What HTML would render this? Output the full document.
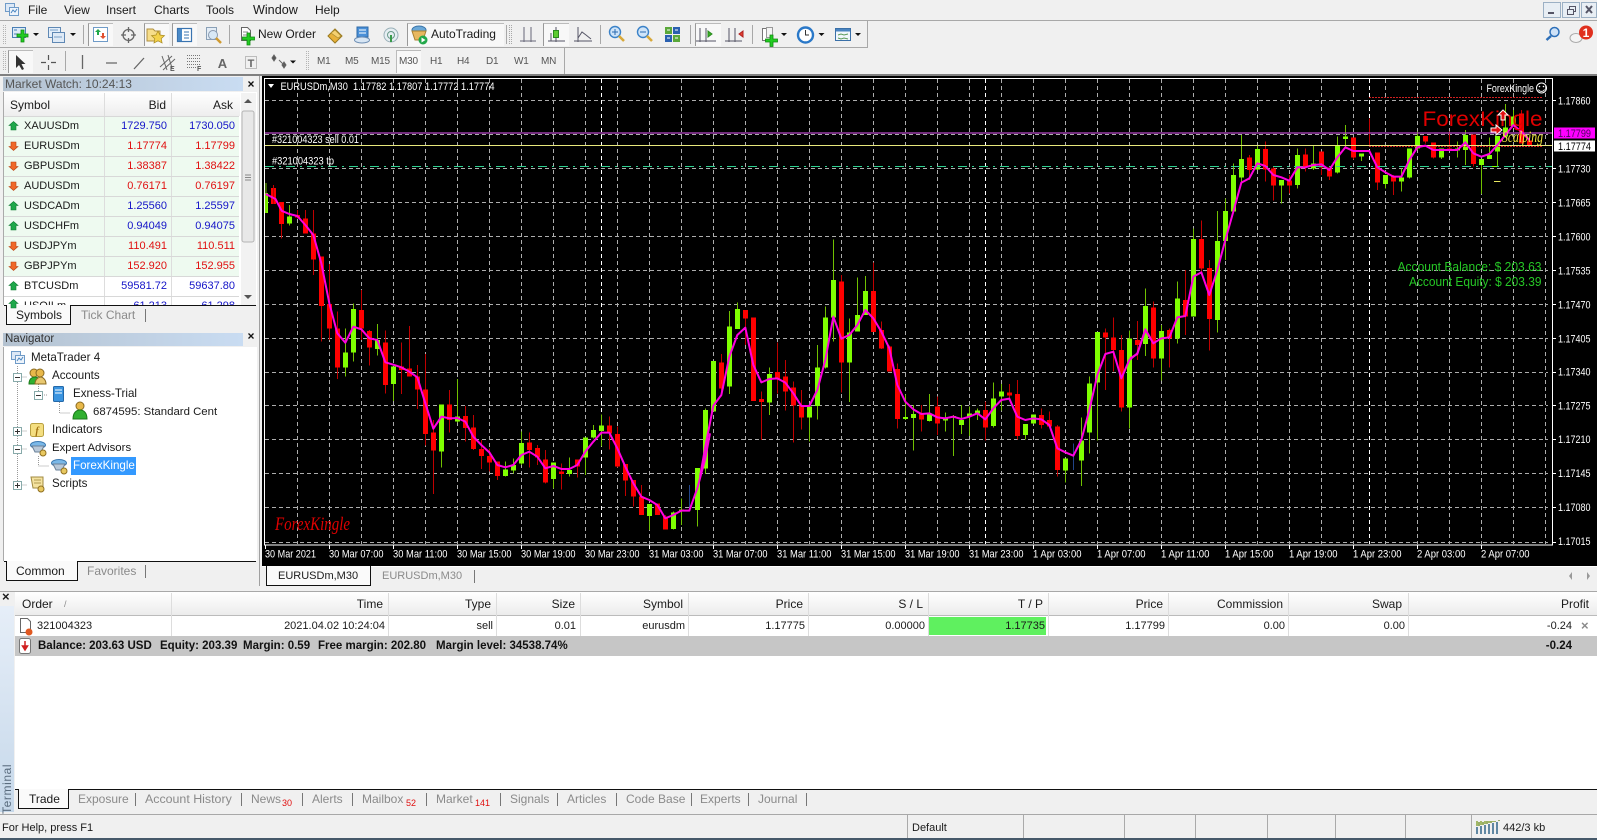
<!DOCTYPE html>
<html><head><meta charset="utf-8"><title>MetaTrader 4</title>
<style>
html,body{margin:0;padding:0;width:1597px;height:840px;overflow:hidden;background:#f0f0f0}
body{font:12px "Liberation Sans",Arial,sans-serif;color:#1a1a1a;position:relative}
.a{position:absolute;white-space:nowrap;line-height:14px}
.b{position:absolute}
.n{font-size:11px}
.bd{font-size:11.5px;font-weight:bold;color:#111}
.g{color:#8a8a8a}
.bl{color:#1414c8}.rd{color:#e01010}
.tf{font-size:10px;color:#555;letter-spacing:-.2px}
sub{position:absolute;color:#e01010;font-size:9px;line-height:9px}
svg{position:absolute;left:0;top:0}
svg text{font-family:"Liberation Sans",Arial,sans-serif}
</style></head><body>

<!-- menu + toolbars background -->
<div class="b" style="left:0;top:20px;width:1597px;height:1px;background:#a8a8a8"></div>
<div class="b" style="left:0;top:47px;width:868px;height:1px;background:#a8a8a8"></div>
<div class="b" style="left:867px;top:21px;width:1px;height:26px;background:#a8a8a8"></div>
<div class="b" style="left:564px;top:48px;width:1px;height:26px;background:#a8a8a8"></div>
<div class="b" style="left:0;top:74px;width:1597px;height:2px;background:#808080"></div>

<div class="a" style="left:28px;top:3px">File</div>
<div class="a" style="left:64px;top:3px">View</div>
<div class="a" style="left:106px;top:3px">Insert</div>
<div class="a" style="left:154px;top:3px">Charts</div>
<div class="a" style="left:206px;top:3px">Tools</div>
<div class="a" style="left:253px;top:3px;font-size:12.6px">Window</div>
<div class="a" style="left:315px;top:3px">Help</div>

<!-- pressed buttons -->
<div class="b" style="left:88px;top:23px;width:24px;height:22px;background:#f8f8f8;border-left:1px solid #999;border-top:1px solid #bbb"></div>
<div class="b" style="left:144px;top:23px;width:24px;height:22px;background:#f8f8f8;border-left:1px solid #999;border-top:1px solid #bbb"></div>
<div class="b" style="left:172px;top:23px;width:24px;height:22px;background:#f8f8f8;border-left:1px solid #999;border-top:1px solid #bbb"></div>
<div class="b" style="left:407px;top:23px;width:96px;height:22px;background:#f8f8f8;border-left:1px solid #999;border-top:1px solid #bbb"></div>
<div class="b" style="left:543px;top:23px;width:25px;height:22px;background:#f8f8f8;border-left:1px solid #999;border-top:1px solid #bbb"></div>
<div class="b" style="left:695px;top:23px;width:25px;height:22px;background:#f8f8f8;border-left:1px solid #999;border-top:1px solid #bbb"></div>
<div class="b" style="left:8px;top:50px;width:24px;height:22px;background:#f8f8f8;border-left:1px solid #999;border-top:1px solid #bbb"></div>
<div class="b" style="left:396px;top:50px;width:24px;height:22px;background:#f8f8f8;border:1px solid #bbb;border-bottom:0;border-right:0"></div>

<div class="a" style="left:258px;top:27px">New Order</div>
<div class="a" style="left:431px;top:27px">AutoTrading</div>

<div class="a tf" style="left:317px;top:55px">M1</div>
<div class="a tf" style="left:345px;top:55px">M5</div>
<div class="a tf" style="left:371px;top:55px">M15</div>
<div class="a tf" style="left:399px;top:55px">M30</div>
<div class="a tf" style="left:430px;top:55px">H1</div>
<div class="a tf" style="left:457px;top:55px">H4</div>
<div class="a tf" style="left:486px;top:55px">D1</div>
<div class="a tf" style="left:514px;top:55px">W1</div>
<div class="a tf" style="left:541px;top:55px">MN</div>

<!-- Market Watch -->
<div class="b" style="left:3px;top:77px;width:240px;height:14px;background:linear-gradient(90deg,#b4c2d0,#c9dcf2)"></div>
<div class="a" style="left:5px;top:77px;color:#555">Market Watch: 10:24:13</div>
<div class="b" style="left:3px;top:92px;width:253px;height:213px;background:#fff;border-left:1px solid #aaa"></div>
<div class="b" style="left:4px;top:92px;width:236px;height:24px;background:linear-gradient(#fff,#eee)"></div>
<div class="b" style="left:104px;top:93px;width:1px;height:212px;background:#ddd"></div>
<div class="b" style="left:171px;top:93px;width:1px;height:212px;background:#ddd"></div>
<div class="b" style="left:4px;top:116px;width:100px;height:160px;background:#eefaf0"></div>
<div class="b" style="left:105px;top:116px;width:66px;height:160px;background:#eefaf0"></div>
<div class="b" style="left:172px;top:116px;width:67px;height:160px;background:#eefaf0"></div>
<div class="b" style="left:4px;top:136px;width:235px;height:1px;background:#d8d8d8"></div>
<div class="b" style="left:4px;top:156px;width:235px;height:1px;background:#d8d8d8"></div>
<div class="b" style="left:4px;top:176px;width:235px;height:1px;background:#d8d8d8"></div>
<div class="b" style="left:4px;top:196px;width:235px;height:1px;background:#d8d8d8"></div>
<div class="b" style="left:4px;top:216px;width:235px;height:1px;background:#d8d8d8"></div>
<div class="b" style="left:4px;top:236px;width:235px;height:1px;background:#d8d8d8"></div>
<div class="b" style="left:4px;top:256px;width:235px;height:1px;background:#d8d8d8"></div>
<div class="b" style="left:4px;top:276px;width:235px;height:1px;background:#d8d8d8"></div>
<div class="b" style="left:4px;top:296px;width:235px;height:1px;background:#d8d8d8"></div>
<div class="b" style="left:4px;top:116px;width:235px;height:1px;background:#d8d8d8"></div>
<div class="a" style="left:10px;top:98px">Symbol</div>
<div class="a" style="right:1431px;top:98px">Bid</div>
<div class="a" style="right:1364px;top:98px">Ask</div>

<div class="a n" style="left:24px;top:119px">XAUUSDm</div><div class="a n bl" style="right:1430px;top:119px">1729.750</div><div class="a n bl" style="right:1362px;top:119px">1730.050</div>
<div class="a n" style="left:24px;top:139px">EURUSDm</div><div class="a n rd" style="right:1430px;top:139px">1.17774</div><div class="a n rd" style="right:1362px;top:139px">1.17799</div>
<div class="a n" style="left:24px;top:159px">GBPUSDm</div><div class="a n rd" style="right:1430px;top:159px">1.38387</div><div class="a n rd" style="right:1362px;top:159px">1.38422</div>
<div class="a n" style="left:24px;top:179px">AUDUSDm</div><div class="a n rd" style="right:1430px;top:179px">0.76171</div><div class="a n rd" style="right:1362px;top:179px">0.76197</div>
<div class="a n" style="left:24px;top:199px">USDCADm</div><div class="a n bl" style="right:1430px;top:199px">1.25560</div><div class="a n bl" style="right:1362px;top:199px">1.25597</div>
<div class="a n" style="left:24px;top:219px">USDCHFm</div><div class="a n bl" style="right:1430px;top:219px">0.94049</div><div class="a n bl" style="right:1362px;top:219px">0.94075</div>
<div class="a n" style="left:24px;top:239px">USDJPYm</div><div class="a n rd" style="right:1430px;top:239px">110.491</div><div class="a n rd" style="right:1362px;top:239px">110.511</div>
<div class="a n" style="left:24px;top:259px">GBPJPYm</div><div class="a n rd" style="right:1430px;top:259px">152.920</div><div class="a n rd" style="right:1362px;top:259px">152.955</div>
<div class="a n" style="left:24px;top:279px">BTCUSDm</div><div class="a n bl" style="right:1430px;top:279px">59581.72</div><div class="a n bl" style="right:1362px;top:279px">59637.80</div>
<div class="a n" style="left:24px;top:299px">USOILm</div><div class="a n bl" style="right:1430px;top:299px">61.213</div><div class="a n bl" style="right:1362px;top:299px">61.298</div>

<!-- MW tabs -->
<div class="b" style="left:0;top:305px;width:260px;height:28px;background:#f0f0f0"></div>
<div class="b" style="left:4px;top:305px;width:252px;height:1px;background:#111"></div>
<div class="b" style="left:6px;top:305px;width:63px;height:19px;background:#fafafa;border:1px solid #111;border-top:0"></div>
<div class="a" style="left:16px;top:308px">Symbols</div>
<div class="a g" style="left:81px;top:308px">Tick Chart</div>
<div class="b" style="left:145px;top:309px;width:1px;height:13px;background:#777"></div>

<!-- Navigator -->
<div class="b" style="left:3px;top:333px;width:240px;height:13px;background:linear-gradient(90deg,#b4c2d0,#c9dcf2)"></div>
<div class="a" style="left:5px;top:332px;color:#333;font-size:11.5px">Navigator</div>
<div class="b" style="left:3px;top:347px;width:253px;height:214px;background:#fff;border-left:1px solid #aaa"></div>
<div class="a" style="left:31px;top:351px;font-size:11.6px">MetaTrader 4</div>
<div class="a" style="left:52px;top:369px;font-size:11.6px">Accounts</div>
<div class="a" style="left:73px;top:387px;font-size:11.6px">Exness-Trial</div>
<div class="a" style="left:93px;top:405px;font-size:11.4px">6874595: Standard Cent</div>
<div class="a" style="left:52px;top:423px;font-size:11.6px">Indicators</div>
<div class="a" style="left:52px;top:441px;font-size:11.4px">Expert Advisors</div>
<div class="b" style="left:71px;top:457px;width:65px;height:18px;background:#3399ff"></div>
<div class="a" style="left:73px;top:459px;color:#fff;font-size:11.6px">ForexKingle</div>
<div class="a" style="left:52px;top:477px;font-size:11.6px">Scripts</div>

<div class="b" style="left:4px;top:561px;width:252px;height:1px;background:#111"></div>
<div class="b" style="left:6px;top:561px;width:70px;height:19px;background:#fafafa;border:1px solid #111;border-top:0"></div>
<div class="a" style="left:16px;top:564px">Common</div>
<div class="a g" style="left:87px;top:564px">Favorites</div>
<div class="b" style="left:145px;top:565px;width:1px;height:13px;background:#777"></div>
<div class="b" style="left:259px;top:76px;width:1px;height:510px;background:#a0a0a0"></div>

<!-- Chart tabs -->
<div class="b" style="left:262px;top:566px;width:1335px;height:1px;background:#fff"></div>
<div class="b" style="left:266px;top:566px;width:103px;height:19px;background:#fafafa;border:1px solid #111;border-top:0"></div>
<div class="a n" style="left:278px;top:569px">EURUSDm,M30</div>
<div class="a n g" style="left:382px;top:569px">EURUSDm,M30</div>
<div class="b" style="left:474px;top:570px;width:1px;height:13px;background:#777"></div>

<!-- Terminal -->
<div class="b" style="left:0;top:591px;width:1597px;height:1px;background:#a8a8a8"></div>
<div class="b" style="left:0;top:606px;width:14px;height:206px;background:linear-gradient(#e6eef8,#c6d8ea)"></div>
<div class="a" style="left:2px;top:590px;font-weight:bold;font-size:13px">×</div>
<div class="a" style="left:-19px;top:781px;width:52px;transform:rotate(-90deg);color:#5a6c7e;font-size:12px;letter-spacing:.6px;text-align:left">Terminal</div>
<div class="b" style="left:15px;top:592px;width:1582px;height:197px;background:#fff"></div>
<div class="b" style="left:15px;top:592px;width:1582px;height:23px;background:linear-gradient(#fff,#ececec);border-bottom:1px solid #bbb"></div>
<div class="b" style="left:15px;top:616px;width:1582px;height:20px;background:#fff"></div>
<div class="b" style="left:929px;top:617px;width:117px;height:18px;background:#5ff05f"></div>
<div class="b" style="left:15px;top:636px;width:1582px;height:20px;background:#c6c6c6"></div>

<div class="b" style="left:171px;top:593px;width:1px;height:43px;background:#ddd"></div>
<div class="b" style="left:388px;top:593px;width:1px;height:43px;background:#ddd"></div>
<div class="b" style="left:496px;top:593px;width:1px;height:43px;background:#ddd"></div>
<div class="b" style="left:580px;top:593px;width:1px;height:43px;background:#ddd"></div>
<div class="b" style="left:688px;top:593px;width:1px;height:43px;background:#ddd"></div>
<div class="b" style="left:808px;top:593px;width:1px;height:43px;background:#ddd"></div>
<div class="b" style="left:928px;top:593px;width:1px;height:43px;background:#ddd"></div>
<div class="b" style="left:1048px;top:593px;width:1px;height:43px;background:#ddd"></div>
<div class="b" style="left:1168px;top:593px;width:1px;height:43px;background:#ddd"></div>
<div class="b" style="left:1288px;top:593px;width:1px;height:43px;background:#ddd"></div>
<div class="b" style="left:1408px;top:593px;width:1px;height:43px;background:#ddd"></div>

<div class="a" style="left:22px;top:597px">Order</div><div class="a g" style="left:64px;top:597px;font-size:9px">/</div>
<div class="a" style="right:1214px;top:597px">Time</div>
<div class="a" style="right:1106px;top:597px">Type</div>
<div class="a" style="right:1022px;top:597px">Size</div>
<div class="a" style="right:914px;top:597px">Symbol</div>
<div class="a" style="right:794px;top:597px">Price</div>
<div class="a" style="right:674px;top:597px">S / L</div>
<div class="a" style="right:554px;top:597px">T / P</div>
<div class="a" style="right:434px;top:597px">Price</div>
<div class="a" style="right:314px;top:597px">Commission</div>
<div class="a" style="right:195px;top:597px">Swap</div>
<div class="a" style="right:8px;top:597px">Profit</div>

<div class="a n" style="left:37px;top:619px">321004323</div>
<div class="a n" style="right:1212px;top:619px">2021.04.02 10:24:04</div>
<div class="a n" style="right:1104px;top:619px">sell</div>
<div class="a n" style="right:1021px;top:619px">0.01</div>
<div class="a n" style="right:912px;top:619px">eurusdm</div>
<div class="a n" style="right:792px;top:619px">1.17775</div>
<div class="a n" style="right:672px;top:619px">0.00000</div>
<div class="a n" style="right:552px;top:619px">1.17735</div>
<div class="a n" style="right:432px;top:619px">1.17799</div>
<div class="a n" style="right:312px;top:619px">0.00</div>
<div class="a n" style="right:192px;top:619px">0.00</div>
<div class="a n" style="right:25px;top:619px">-0.24</div>
<div class="a g" style="left:1581px;top:619px;font-size:13px;font-weight:bold">×</div>

<div class="a bd" style="left:38px;top:639px">Balance: 203.63 USD</div>
<div class="a bd" style="left:160px;top:639px">Equity: 203.39</div>
<div class="a bd" style="left:243px;top:639px">Margin: 0.59</div>
<div class="a bd" style="left:318px;top:639px">Free margin: 202.80</div>
<div class="a bd" style="left:436px;top:639px">Margin level: 34538.74%</div>
<div class="a bd" style="right:25px;top:639px">-0.24</div>

<!-- Terminal tabs -->
<div class="b" style="left:15px;top:789px;width:1582px;height:1px;background:#111"></div>
<div class="b" style="left:18px;top:789px;width:49px;height:19px;background:#fafafa;border:1px solid #111;border-top:0"></div>
<div class="a" style="left:29px;top:792px">Trade</div>
<div class="a g" style="left:78px;top:792px">Exposure</div>
<div class="a g" style="left:145px;top:792px;font-size:12.4px">Account History</div>
<div class="a g" style="left:251px;top:792px">News</div><sub style="left:282px;top:799px">30</sub>
<div class="a g" style="left:312px;top:792px">Alerts</div>
<div class="a g" style="left:362px;top:792px">Mailbox</div><sub style="left:406px;top:799px">52</sub>
<div class="a g" style="left:436px;top:792px">Market</div><sub style="left:475px;top:799px">141</sub>
<div class="a g" style="left:510px;top:792px">Signals</div>
<div class="a g" style="left:567px;top:792px">Articles</div>
<div class="a g" style="left:626px;top:792px">Code Base</div>
<div class="a g" style="left:700px;top:792px">Experts</div>
<div class="a g" style="left:758px;top:792px">Journal</div>
<div class="b" style="left:135px;top:793px;width:1px;height:13px;background:#777"></div>
<div class="b" style="left:241px;top:793px;width:1px;height:13px;background:#777"></div>
<div class="b" style="left:302px;top:793px;width:1px;height:13px;background:#777"></div>
<div class="b" style="left:352px;top:793px;width:1px;height:13px;background:#777"></div>
<div class="b" style="left:426px;top:793px;width:1px;height:13px;background:#777"></div>
<div class="b" style="left:500px;top:793px;width:1px;height:13px;background:#777"></div>
<div class="b" style="left:557px;top:793px;width:1px;height:13px;background:#777"></div>
<div class="b" style="left:616px;top:793px;width:1px;height:13px;background:#777"></div>
<div class="b" style="left:691px;top:793px;width:1px;height:13px;background:#777"></div>
<div class="b" style="left:748px;top:793px;width:1px;height:13px;background:#777"></div>
<div class="b" style="left:806px;top:793px;width:1px;height:13px;background:#777"></div>

<!-- Status bar -->
<div class="b" style="left:0;top:814px;width:1597px;height:1px;background:#a8a8a8"></div>
<div class="a n" style="left:2px;top:821px">For Help, press F1</div>
<div class="a n" style="left:912px;top:821px">Default</div>
<div class="a n" style="left:1503px;top:821px">442/3 kb</div>
<div class="b" style="left:907px;top:815px;width:1px;height:23px;background:#aaa"></div>
<div class="b" style="left:1023px;top:815px;width:1px;height:23px;background:#aaa"></div>
<div class="b" style="left:1124px;top:815px;width:1px;height:23px;background:#aaa"></div>
<div class="b" style="left:1195px;top:815px;width:1px;height:23px;background:#aaa"></div>
<div class="b" style="left:1267px;top:815px;width:1px;height:23px;background:#aaa"></div>
<div class="b" style="left:1335px;top:815px;width:1px;height:23px;background:#aaa"></div>
<div class="b" style="left:1405px;top:815px;width:1px;height:23px;background:#aaa"></div>
<div class="b" style="left:1471px;top:815px;width:1px;height:23px;background:#aaa"></div>
<div class="b" style="left:0;top:838px;width:1597px;height:2px;background:#46596a"></div>

<!-- Everything drawn -->
<svg width="1597" height="840" viewBox="0 0 1597 840" xmlns="http://www.w3.org/2000/svg">
<defs>
<clipPath id="cc"><rect x="265" y="79" width="1287" height="465"/></clipPath>
<path id="up" d="M0-4.500 4.500-.5H2.500V4H-2.500V-.5H-4.500Z" fill="#1ea84a" stroke="#0c7a30" stroke-width=".6"/>
<path id="dn" d="M0 4.500 4.500 .5H2.500V-4H-2.500V.5H-4.500Z" fill="#f0682a" stroke="#b84010" stroke-width=".6"/>
</defs>

<!-- window buttons -->
<g fill="#e8eef4" stroke="#9cb0c4">
<rect x="1543.5" y="2.5" width="17" height="15"/><rect x="1562.5" y="2.5" width="17" height="15"/><rect x="1581.5" y="2.5" width="15" height="15"/>
</g>
<path d="M1548 13h6" stroke="#556" stroke-width="2"/>
<path d="M1567.5 9.5h6v5h-6zM1569.5 9V6.5h6v5h-2" fill="none" stroke="#556"/>
<path d="M1586 6l6 7M1592 6l-6 7" stroke="#556" stroke-width="2"/>

<!-- right icons -->
<circle cx="1554.5" cy="32" r="4.5" fill="#cfe2f7" stroke="#2d6fb8" stroke-width="1.5"/>
<path d="M1551 36l-4.5 4" stroke="#2d6fb8" stroke-width="2.5"/>
<ellipse cx="1576" cy="38" rx="6" ry="4.5" fill="#f4f4f4" stroke="#aaa"/>
<circle cx="1586" cy="32.5" r="7" fill="#e0301e"/>
<text x="1586" y="37" font-size="12" font-weight="bold" fill="#fff" text-anchor="middle">1</text>

<!-- menu logo -->
<rect x="5.5" y="3.5" width="9" height="8" fill="#dce8f6" stroke="#6f9bc8"/><rect x="9.5" y="7.5" width="9" height="8" fill="#eef4fb" stroke="#6f9bc8"/>
<path d="M11 13l2-3 2 2 2-3" fill="none" stroke="#4a86c0"/>

<!-- grips and toolbar separators -->
<g stroke="#b4b4b4" stroke-dasharray="1 1" fill="none">
<path d="M3.5 25V44M5.5 25V44M3.5 51V71M5.5 51V71M306.5 51V71M308.5 51V71"/>
</g>
<g stroke="#a8a8a8">
<path d="M83.5 25V44M229.5 25V44M506.5 25V44M600.5 25V44M690.5 25V44M752.5 25V44M65.5 51V71"/>
<path d="M509.5 25V44M511.5 25V44" stroke-dasharray="1 1"/>
</g>

<!-- toolbar 1 icons -->
<g>
<rect x="12.5" y="27.5" width="13" height="10" fill="#dceaf8" stroke="#4a7fb5"/><path d="M14 30h3M14 34h4" stroke="#4a7fb5"/>
<path d="M21 30h3v4h4v3h-4v5h-3v-5h-4v-3h4z" fill="#22cc22" stroke="#0f8a0f" stroke-width=".8"/>
<path d="M33 33h6l-3 3z" fill="#111"/>
<rect x="48.5" y="27.5" width="12" height="10" fill="#e3eefa" stroke="#5f88b4"/><rect x="52.5" y="32.5" width="12" height="10" fill="#dfeaf6" stroke="#5f88b4"/><path d="M50 30h8M54 37h8" stroke="#7aa0c8"/>
<path d="M70 33h6l-3 3z" fill="#111"/>
<rect x="93.5" y="27.5" width="14" height="14" fill="#fff" stroke="#6f9bc8"/><path d="M98 29l3 3h-2v3h-2v-3h-2z" fill="#1fa84a"/><path d="M103 39l3-3h-2v-3h-2v3h-2z" fill="#e05030"/>
<circle cx="128.5" cy="35" r="5.5" fill="none" stroke="#666" stroke-width="1.3"/><path d="M128.5 27v5M128.5 38v5M121 35h5M131 35h5" stroke="#666" stroke-width="1.3"/>
<path d="M147 29h6l2 2h5v10h-13z" fill="#f6dd8a" stroke="#b09040"/><path d="M158 31l2 4 4.5.6-3.3 3 .9 4.4-4.1-2.2-4 2.2.8-4.4-3.3-3 4.500-.6z" fill="#f4d24a" stroke="#a88a20" stroke-width=".7"/>
<rect x="177.5" y="28.5" width="14" height="13" fill="#fff" stroke="#3a74b0" stroke-width="1.2"/><rect x="178" y="29" width="4" height="12" fill="#4a8ac8"/><path d="M184 32h5M184 35h5M184 38h5" stroke="#3a74b0"/>
<rect x="206.5" y="27.5" width="10" height="12" fill="#e4edf6" stroke="#8aa0b6"/><circle cx="213" cy="35" r="4.5" fill="#d8e8f6" stroke="#8a9ab0"/><path d="M216 38l5 5" stroke="#d09a30" stroke-width="2.5"/>
</g>
<g>
<path d="M241.5 27.5h6l3 3v10h-9z" fill="#fff" stroke="#666"/>
<path d="M243 32h5M243 35h5" stroke="#888"/>
<path d="M247 33h3v4h4.5v3h-4.5v5h-3v-5h-4.5v-3h4.5z" fill="#22cc22" stroke="#0f8a0f" stroke-width=".8"/>
<path d="M328 36l7-7 7 7-7 7z" fill="#e8b13a" stroke="#9a7a20"/><path d="M331 33l4-3 6 6-3 2z" fill="#f5d070" stroke="#a88a30" stroke-width=".7"/>
<path d="M357 27h11v10h-11z" fill="#4a90d8" stroke="#2e6aa8"/><path d="M359 30h7M359 33h7" stroke="#fff"/>
<ellipse cx="362" cy="40" rx="7.5" ry="3" fill="#d8e6f4" stroke="#6f8fb4"/>
<circle cx="391" cy="35" r="7" fill="#e6eef2" stroke="#9ab0b8"/><circle cx="391" cy="35" r="3.5" fill="none" stroke="#6a9a8a"/><path d="M391 35v7" stroke="#3a9a4a" stroke-width="2"/>
<ellipse cx="419" cy="30" rx="7" ry="4" fill="#6aa8d8" stroke="#3a74a8"/>
<path d="M412 31h14l-3 9h-8z" fill="#e8b860" stroke="#a88030"/>
<circle cx="423" cy="40" r="4.5" fill="#22a84a"/><path d="M421.5 37.5l4 2.5-4 2.5z" fill="#fff"/>
</g>
<g fill="none" stroke="#556">
<path d="M524 27v15M531 27v15M520 41h16" stroke="#667"/>
<path d="M556 27v15M548 41h17M551 33v8"/>
<rect x="553.5" y="30.5" width="5" height="7" fill="#5ccc30" stroke="#2a8a20"/>
<path d="M578 27v15M574 41h18M578 38l4-6 4 3 5 4"/>
<path d="M700 28v14M716 41h-20M706 28v14"/><path d="M708 31l4 3-4 3z" fill="#3ab020" stroke="#2a8a20"/>
<path d="M729 28v14M735 28v14M725 41h17"/><path d="M743 31l-4 3 4 3z" fill="#e04030" stroke="#b02020"/>
</g>
<g>
<circle cx="615" cy="32" r="5.5" fill="#cfe4f8" stroke="#3a82c8" stroke-width="1.4"/><path d="M612 32h6M615 29v6" stroke="#2a6ab0"/><path d="M619 36l5 5" stroke="#d8a83a" stroke-width="2.6"/>
<circle cx="643" cy="32" r="5.5" fill="#cfe4f8" stroke="#3a82c8" stroke-width="1.4"/><path d="M640 32h6" stroke="#2a6ab0"/><path d="M647 36l5 5" stroke="#d8a83a" stroke-width="2.6"/>
<rect x="665" y="27" width="7" height="7" fill="#5aa83a"/><rect x="673" y="27" width="7" height="7" fill="#2a60b0"/><rect x="665" y="35" width="7" height="7" fill="#2a60b0"/><rect x="673" y="35" width="7" height="7" fill="#5aa83a"/>
<path d="M667 30h3M675 30h3M667 38h3M675 38h3" stroke="#fff"/>
<rect x="762.5" y="28.5" width="10" height="12" fill="#fff" stroke="#777"/><rect x="766.5" y="27.5" width="6" height="10" fill="#f4f4f4" stroke="#999"/>
<path d="M770 35h3v4h4.5v3H773v4.5h-3V42h-4.5v-3h4.5z" fill="#22cc22" stroke="#0f8a0f" stroke-width=".8"/>
<path d="M781 33h6l-3 3z" fill="#111"/>
<circle cx="805.5" cy="35" r="7.5" fill="#fff" stroke="#2a78c8" stroke-width="2.4"/><path d="M805.5 30v5h3.5" fill="none" stroke="#333"/>
<path d="M818.5 33h6l-3 3z" fill="#111"/>
<rect x="835.5" y="28.5" width="15" height="12" fill="#f0f6fc" stroke="#3a70a8"/><rect x="836" y="29" width="14" height="2.5" fill="#4a84c0"/><path d="M838 35l3-1 3 1 4-1M838 38l3 1 3-1 4 1" fill="none" stroke="#5a9a5a"/>
<path d="M855 33h6l-3 3z" fill="#111"/>
</g>

<!-- toolbar 2 icons -->
<path d="M16 55l0 13 3-3 3 5 2-1-2.5-5 4 0z" fill="#333"/>
<path d="M48.5 55v5M48.5 65v5M41 62.5h5M51 62.5h5" stroke="#555" stroke-width="1.2"/>
<path d="M82.5 55v14M106 63h11M134 69l10-11" stroke="#666" stroke-width="1.3"/>
<g stroke="#666" fill="none"><path d="M160 67l12-11M163 70l12-11M162 56l5 14M168 55l4 13" /></g>
<text x="170" y="71" font-size="7" font-weight="bold" fill="#555">E</text>
<g stroke="#777" stroke-dasharray="1 1"><path d="M187 55.5h14M187 58.5h14M187 61.5h14M187 64.5h14M187 67.5h10"/></g>
<text x="197" y="71" font-size="7" font-weight="bold" fill="#555">F</text>
<text x="222.5" y="68" font-size="13" font-weight="bold" fill="#666" text-anchor="middle">A</text>
<rect x="245.5" y="56.5" width="11" height="12" fill="none" stroke="#888" stroke-dasharray="1 1"/>
<text x="251" y="67" font-size="11" font-weight="bold" fill="#666" text-anchor="middle">T</text>
<path d="M274 55l2 3-2 3-2-3zM279 60l6 6M284 62l2 3-2 3-2-3z" fill="#555" stroke="#666"/>
<path d="M290 60.5h6l-3 3z" fill="#111"/>

<!-- MW close + scrollbar -->
<path d="M248.500 81.500l5 5M253.500 81.500l-5 5" stroke="#111" stroke-width="1.300"/>
<path d="M248.500 333.500l5 5M253.500 333.500l-5 5" stroke="#111" stroke-width="1.300"/>
<rect x="241" y="93" width="15" height="212" fill="#f2f2f2"/>
<rect x="242" y="111" width="12" height="131" rx="2" fill="#e8e8e8" stroke="#b4b4b4"/>
<path d="M245 175h6M245 177.5h6M245 180h6" stroke="#888"/>
<path d="M248 99l4 4h-8zM248 299l4-4h-8z" fill="#555"/>

<use href="#up" x="13.5" y="126"/><use href="#dn" x="13.5" y="146"/><use href="#dn" x="13.5" y="166"/><use href="#dn" x="13.5" y="186"/>
<use href="#up" x="13.5" y="206"/><use href="#up" x="13.5" y="226"/><use href="#dn" x="13.5" y="246"/><use href="#dn" x="13.5" y="266"/><use href="#up" x="13.5" y="286"/><use href="#up" x="13.5" y="304"/>

<!-- Navigator tree -->
<g stroke="#999" stroke-dasharray="1 1" fill="none">
<path d="M17.5 366V485M38.5 384V395M59.5 402V413H70M38.5 456V466H49M17.5 377H27M17.5 431H27M17.5 449H27M17.5 485H27M38 395H48"/>
</g>
<g fill="#fff" stroke="#8aa"><rect x="13.5" y="373.5" width="8" height="8"/><rect x="34.5" y="391.5" width="8" height="8"/><rect x="13.5" y="427.5" width="8" height="8"/><rect x="13.5" y="445.5" width="8" height="8"/><rect x="13.5" y="481.5" width="8" height="8"/></g>
<path d="M15 377.5h5M36 395.5h5M15 431.5h5M17.5 429v5M15 449.5h5M15 485.5h5M17.5 483v5" stroke="#333"/>
<rect x="11.5" y="351.5" width="9" height="8" fill="#dce8f6" stroke="#6f9bc8"/><rect x="15.5" y="355.5" width="9" height="8" fill="#eef4fb" stroke="#6f9bc8"/><path d="M17 361l2-3 2 2 2-3" fill="none" stroke="#4a86c0"/>
<circle cx="34" cy="373" r="4" fill="#e8b84a" stroke="#8a6a20"/><circle cx="40" cy="373" r="4" fill="#e8b84a" stroke="#8a6a20"/>
<path d="M29 384c0-6 4-7 6-7s5 1 5 7z" fill="#30b030" stroke="#1a7a1a"/><path d="M35 384c0-6 5-7 6-7s5 2 5 7z" fill="#e8c870" stroke="#8a6a20"/>
<rect x="53.5" y="386.5" width="10" height="15" rx="1" fill="#3a94e0" stroke="#2468a8"/><path d="M55 390h7M55 393h7" stroke="#fff"/>
<circle cx="80" cy="406" r="4" fill="#e8b84a" stroke="#8a6a20"/><path d="M73 419c0-7 4-9 7-9s7 2 7 9z" fill="#30b030" stroke="#1a7a1a"/>
<rect x="30.5" y="423.5" width="13" height="13" rx="2" fill="#f4de80" stroke="#b8a040"/><text x="37" y="434" font-size="10" font-style="italic" font-weight="bold" fill="#a07010" text-anchor="middle" style="font-family:'Liberation Serif',serif">f</text>
<ellipse cx="38" cy="445" rx="7.5" ry="3.5" fill="#7ab8e8" stroke="#3a78b0"/><path d="M32 446h12l-3 6h-6z" fill="#b8c8d8" stroke="#6a8098"/><circle cx="43" cy="453" r="3" fill="#e8c860" stroke="#907020"/>
<ellipse cx="59" cy="463" rx="7.5" ry="3.5" fill="#7ab8e8" stroke="#3a78b0"/><path d="M53 464h12l-3 6h-6z" fill="#b8c8d8" stroke="#6a8098"/><circle cx="64" cy="471" r="3" fill="#e8c860" stroke="#907020"/>
<path d="M31 477h12v11h-10z" fill="#f4e2a0" stroke="#a08a40"/><path d="M34 480h7M34 483h7" stroke="#b09a50"/><circle cx="41" cy="489" r="3" fill="#e8c860" stroke="#907020"/>

<!-- Terminal icons -->
<path d="M20.5 618.5h7l3 3v11h-10z" fill="#fff" stroke="#666"/><circle cx="29" cy="632" r="3.5" fill="#e05820"/>
<rect x="19.5" y="638.5" width="11" height="15" rx="2" fill="#fff" stroke="#777"/><path d="M25 641v5M22.5 646h5l-2.5 4z" stroke="#d02020" fill="#d02020" stroke-width="1.5"/>

<!-- Tab scroll arrows -->
<path d="M1572 572v8l-3-4zM1587 572v8l3-4z" fill="#999"/>

<!-- conn icon -->
<g stroke-width="1.3">
<path d="M1477 834v-7M1481 834v-8M1485 834v-9M1489 834v-10M1493 834v-11M1497 834v-12" stroke="#14507a"/>
<path d="M1479 826v-4M1483 825v-3M1487 824v-3M1491 823v-2M1495 822v-1M1499 821v-1" stroke="#6a8a20"/>
<path d="M1477 826v-5M1481 825v-4M1485 824v-3M1489 823v-2M1493 822v-1" stroke="#7a9a20"/>
</g>

<!-- CHART -->
<rect x="262" y="76" width="1335" height="490" fill="#000"/>
<rect x="264.5" y="78.5" width="1288" height="466.5" fill="none" stroke="#fff"/>
<g clip-path="url(#cc)">
<path stroke="#adadad" stroke-dasharray="4 3" fill="none" d="M265 100.5H1548M265 134.5H1548M265 168.5H1548M265 202.5H1548M265 236.5H1548M265 270.5H1548M265 304.5H1548M265 338.5H1548M265 372.5H1548M265 405.5H1548M265 439.5H1548M265 473.5H1548M265 507.5H1548M265 542.5H1548"/>
<path stroke="#adadad" stroke-dasharray="4 3" fill="none" d="M297.5 79V544M329.5 79V544M361.5 79V544M393.5 79V544M425.5 79V544M457.5 79V544M489.5 79V544M521.5 79V544M553.5 79V544M585.5 79V544M617.5 79V544M649.5 79V544M681.5 79V544M713.5 79V544M745.5 79V544M777.5 79V544M809.5 79V544M841.5 79V544M873.5 79V544M905.5 79V544M937.5 79V544M969.5 79V544M1001.5 79V544M1033.5 79V544M1065.5 79V544M1097.5 79V544M1129.5 79V544M1161.5 79V544M1193.5 79V544M1225.5 79V544M1257.5 79V544M1289.5 79V544M1321.5 79V544M1353.5 79V544M1385.5 79V544M1417.5 79V544M1449.5 79V544M1481.5 79V544M1513.5 79V544M1545.5 79V544"/>
<path stroke="#fff" stroke-dasharray="4 3" fill="none" d="M601.5 79V544M985.5 79V544M1369.5 79V544"/>

<!-- first candles -->
<rect x="265" y="193" width="3" height="20" fill="#7fff00"/>
<path d="M266 183V213" stroke="#70c000"/>
<rect x="271" y="188" width="5" height="16" fill="#f00"/><path d="M273.5 185V204" stroke="#c00000"/>

<g transform="translate(260 200) scale(.33333)" fill="none" shape-rendering="crispEdges">
<path stroke="#c00000" stroke-width="3" d="M64 6V115M112 30V55M136 30V100M160 30V225M184 170V425M208 192V420M232 335V537M304 270V420M328 390V497M376 392V580M424 427V582M448 378V530M472 495V627M496 462V737M520 660V882M568 570V698M616 618V725M640 645V750M664 720V807M688 745V815M712 785V840M808 698V803M832 735V795M856 750V850M904 790V868M952 778V832M1048 650V748M1072 680V803M1096 792V888M1120 840V920M1144 855V945M1192 910V945M1216 945V988"/>
<path stroke="#f00" stroke-width="15" d="M64 6V72M112 45V52M136 55V100M160 100V178M184 170V318M208 312V385M232 385V502M304 330V385M328 393V443M376 427V555M424 500V510M448 505V530M472 530V568M496 568V702M520 698V752M568 613V660M616 648V684M640 682V747M664 747V768M688 768V787M712 785V828M808 727V750M832 744V772M856 778V848M904 815V822M952 778V800M1048 676V700M1072 702V800M1096 792V842M1120 840V890M1144 890V945M1192 910V945M1216 950V988"/>
<path stroke="#70c000" stroke-width="3" d="M88 15V77M256 385V530M280 310V485M352 372V467M400 500V603M544 613V803M592 537V668M736 785V830M760 775V820M784 695V795M880 787V865M928 772V830M976 713V825M1000 675V715M1024 643V740M1168 912V990M1240 935V988M1264 895V975M1312 804V980M1336 625V822"/>
<path stroke="#7fff00" stroke-width="15" d="M88 50V70M256 457V503M280 327V458M352 420V447M400 500V552M544 613V755M592 650V665M736 808V828M760 795V812M784 729V790M880 787V837M928 810V822M976 713V773M1000 690V713M1024 676V693M1168 912V948M1240 938V987M1264 928V935M1312 804V930M1336 630V805"/>
<path stroke="#224488" stroke-width="3" d="M1288 855V930"/>
</g>

<g transform="translate(700 200) scale(.33333)" fill="none" shape-rendering="crispEdges">
<path stroke="#c00000" stroke-width="3" d="M64 462V590M136 330V435M160 353V603M184 575V720M232 427V580M256 480V632M280 545V727M304 570V688M424 225V578M520 188V396M544 365V447M568 437V515M592 490V685M664 615V695M712 590V705M856 605V722M928 552V600M952 540V718M1024 625V685M1048 635V680M1072 675V830M1216 385V570M1240 353V515M1264 405V635M1312 363V480"/>
<path stroke="#f00" stroke-width="15" d="M64 487V565M136 330V356M160 353V603M184 597V606M232 516V535M256 530V575M280 563V617M304 617V653M424 244V488M520 273V396M544 390V445M568 440V515M592 507V657M664 642V658M712 620V670M856 630V682M928 577V587M952 582V708M1024 645V675M1048 660V680M1072 680V810M1216 398V412M1240 412V450M1264 450V623M1312 420V435"/>
<path stroke="#70c000" stroke-width="3" d="M40 483V635M88 333V582M112 307V387M208 502V645M328 620V725M352 435V658M376 320V505M400 118V425M448 355V606M472 232V395M496 228V345M616 583V660M640 615V752M688 582V665M736 637V695M760 645V768M784 615V702M808 620V708M832 625V660M880 548V682M904 552V632M976 672V718M1000 643V672M1096 775V848M1144 652V858M1168 530V760M1192 396V722M1288 392V685M1336 265V468"/>
<path stroke="#7fff00" stroke-width="15" d="M40 483V635M88 380V560M112 327V387M208 522V608M328 620V652M352 503V618M376 353V503M400 240V352M448 397V488M472 345V395M496 273V345M616 651V657M640 642V654M688 640V663M736 655V662M760 648V653M784 660V675M808 640V650M832 631V640M880 595V678M904 574V590M976 672V705M1000 643V670M1096 775V812M1144 722V782M1168 550V698M1192 396V548M1288 416V623M1336 318V432"/>
<path stroke="#224488" stroke-width="3" d="M1120 730V810"/>
</g>

<g transform="translate(1130 80) scale(.33333)" fill="none" shape-rendering="crispEdges">
<path stroke="#c00000" stroke-width="3" d="M70 665V862M118 745V862M166 570V765M214 422V575M238 540V812M358 225V300M406 185V305M430 258V362M478 285V340M526 205V275M574 215V285M598 262V300M670 173V238M718 115V200M742 217V330M790 285V345M886 168V190M910 188V235M958 155V212M1030 163V260M1174 90V190M1198 182V195"/>
<path stroke="#f00" stroke-width="15" d="M70 682V836M118 750V775M166 660V710M214 477V565M238 564V717M358 233V270M406 207V268M430 265V317M478 302V317M526 223V262M574 215V262M598 262V290M670 173V233M742 217V308M790 288V305M886 168V185M910 188V232M958 205V212M1030 163V252M1174 100V190M1198 182V195"/>
<path stroke="#70c000" stroke-width="3" d="M94 735V902M142 605V790M190 445V710M262 393V758M286 355V540M310 250V397M334 165V310M382 195V270M454 300V370M502 205V325M550 195V270M622 170V280M646 135V205M694 220V243M766 285V325M814 265V335M838 205V295M862 155V210M934 205V237M982 185V233M1006 150V255M1054 237V342M1078 172V237M1102 168V260M1126 72V170M1150 90V140"/>
<path stroke="#7fff00" stroke-width="15" d="M94 753V836M142 655V776M190 477V710M262 483V720M286 393V483M310 285V395M334 237V292M382 207V268M454 300V317M502 225V315M550 250V265M622 196V278M646 170V177M694 220V230M766 285V312M814 292V305M838 205V292M862 168V205M934 205V232M982 205V212M1006 165V210M1054 237V255M1078 225V237M1102 168V215M1126 142V170M1150 110V140"/>
<path stroke="#7fff00" stroke-width="3" d="M1078 260H1102"/>
<path stroke="#e8e860" stroke-width="3" d="M1092 304H1112"/>
<path stroke="#fff" stroke-width="3" d="M1188 260H1208"/>
</g>

<!-- order / red lines -->
<path d="M265 133H1552" stroke="#b848c8" stroke-width="1.3"/>
<path d="M265 145.5H1552" stroke="#e8e87c" stroke-width="1.1"/>
<path d="M265 166.5H1552" stroke="#2fd090" stroke-dasharray="9 5 2 5"/>
<path d="M1369 97.5H1542M1369 146.5H1542" stroke="#d02020" stroke-dasharray="2 1"/>

<!-- MA -->
<path d="M265.7 194L275.5 199L281.6 210.7" fill="none" stroke="#ff00e0" stroke-width="2"/>
<g transform="translate(260 200) scale(.33333)"><path fill="none" stroke="#ff00e0" stroke-width="6" stroke-linejoin="round" d="M64 32L88 42L112 48L136 75L160 105L184 190L208 310L232 400L256 428L280 380L304 388L328 415L352 420L376 487L400 494L424 502L448 515L472 532L496 610L520 686L544 650L568 655L592 654L616 665L640 710L664 735L688 757L712 795L736 802L760 795L784 765L808 755L832 770L856 805L880 798L904 807L928 807L952 795L976 755L1000 725L1024 698L1048 698L1072 745L1096 800L1120 850L1144 890L1168 900L1192 915L1216 955L1240 945L1264 932L1288 932L1312 865L1336 775L1350 700"/></g>
<g transform="translate(700 200) scale(.33333)"><path fill="none" stroke="#ff00e0" stroke-width="6" stroke-linejoin="round" d="M0 830L16 740L40 617L64 585L88 470L112 405L136 383L160 495L184 547L208 537L232 535L256 548L280 580L304 618L328 618L352 570L376 480L400 350L424 416L448 405L472 375L496 330L520 355L544 395L568 445L592 555L616 605L640 628L664 642L688 640L712 652L736 655L760 650L784 657L808 650L832 640L856 658L880 625L904 600L928 596L952 650L976 660L1000 655L1024 658L1048 675L1072 745L1096 757L1120 767L1144 720L1168 630L1192 525L1216 462L1240 455L1264 535L1288 480L1312 460L1336 390L1350 412"/></g>
<g transform="translate(1130 80) scale(.33333)"><path fill="none" stroke="#ff00e0" stroke-width="6" stroke-linejoin="round" d="M0 835L22 822L46 748L70 790L94 775L118 772L142 712L166 708L190 590L214 577L238 645L262 570L286 480L310 395L334 308L358 295L382 250L406 258L430 285L454 292L478 302L502 262L526 262L550 255L574 253L598 270L622 232L646 202L670 213L694 213L718 213L742 262L766 277L790 290L814 290L838 240L862 202L886 197L910 210L934 210L958 210L982 210L1006 187L1030 220L1054 230L1078 222L1102 195L1126 165L1150 135L1174 155L1198 180"/></g>

<!-- chart texts -->
<path d="M268 84h6l-3 4z" fill="#fff"/>
<text x="280.5" y="90" font-size="11" fill="#fff" textLength="214" lengthAdjust="spacingAndGlyphs">EURUSDm,M30&#160;&#160;1.17782 1.17807 1.17772 1.17774</text>
<text x="272" y="143" font-size="11" fill="#fff" textLength="87" lengthAdjust="spacingAndGlyphs">#321004323 sell 0.01</text>
<text x="272" y="164.5" font-size="11" fill="#fff" textLength="62" lengthAdjust="spacingAndGlyphs">#321004323 tp</text>
<text x="1486.5" y="92" font-size="11" fill="#fff" textLength="47.5" lengthAdjust="spacingAndGlyphs">ForexKingle</text>
<circle cx="1541.5" cy="88" r="5" fill="none" stroke="#fff"/><path d="M1538.5 89.5c1 2.5 5 2.5 6 0" fill="none" stroke="#fff"/><circle cx="1539.5" cy="86.5" r=".8" fill="#fff"/><circle cx="1543.5" cy="86.5" r=".8" fill="#fff"/>
<text x="1422.5" y="126" font-size="21" fill="#e00000" textLength="120" lengthAdjust="spacingAndGlyphs">ForexKingle</text>
<path d="M1491 130l6-5v3h5v4h-5v3z" transform="rotate(180 1496.5 130)" fill="#e01010" stroke="#fff"/>
<path d="M1498 115l5-5 5 5h-3v5h-4v-5z" fill="#e01010" stroke="#fff"/>
<text x="1502" y="142" font-size="16" font-style="italic" fill="#f4e840" textLength="41" lengthAdjust="spacingAndGlyphs" style="font-family:'Liberation Serif',serif">Scalping</text>
<text x="1397.5" y="271" font-size="13" fill="#26c826" textLength="144" lengthAdjust="spacingAndGlyphs">Account Balance: $ 203.63</text>
<text x="1409" y="286" font-size="13" fill="#26c826" textLength="132.5" lengthAdjust="spacingAndGlyphs">Account Equity: $ 203.39</text>
<text x="275" y="530" font-size="19" font-style="italic" fill="#e00000" textLength="75" lengthAdjust="spacingAndGlyphs" style="font-family:'Liberation Serif',serif">ForexKingle</text>
</g>

<!-- axis ticks -->
<path stroke="#fff" d="M1553 100.5h3M1553 168.5h3M1553 202.5h3M1553 236.5h3M1553 270.5h3M1553 304.5h3M1553 338.5h3M1553 372.5h3M1553 405.5h3M1553 439.5h3M1553 473.5h3M1553 507.5h3M1553 542.5h3"/>
<path stroke="#fff" d="M265.5 545v4M329.5 545v4M393.5 545v4M457.5 545v4M521.5 545v4M585.5 545v4M649.5 545v4M713.5 545v4M777.5 545v4M841.5 545v4M905.5 545v4M969.5 545v4M1033.5 545v4M1097.5 545v4M1161.5 545v4M1225.5 545v4M1289.5 545v4M1353.5 545v4M1417.5 545v4M1481.5 545v4"/>

<g fill="#fff" font-size="11">
<text x="1558" y="104.5" textLength="32.5" lengthAdjust="spacingAndGlyphs">1.17860</text>
<text x="1558" y="172.5" textLength="32.5" lengthAdjust="spacingAndGlyphs">1.17730</text>
<text x="1558" y="206.5" textLength="32.5" lengthAdjust="spacingAndGlyphs">1.17665</text>
<text x="1558" y="240.5" textLength="32.5" lengthAdjust="spacingAndGlyphs">1.17600</text>
<text x="1558" y="274.5" textLength="32.5" lengthAdjust="spacingAndGlyphs">1.17535</text>
<text x="1558" y="308.5" textLength="32.5" lengthAdjust="spacingAndGlyphs">1.17470</text>
<text x="1558" y="342.5" textLength="32.5" lengthAdjust="spacingAndGlyphs">1.17405</text>
<text x="1558" y="375.5" textLength="32.5" lengthAdjust="spacingAndGlyphs">1.17340</text>
<text x="1558" y="409.5" textLength="32.5" lengthAdjust="spacingAndGlyphs">1.17275</text>
<text x="1558" y="443" textLength="32.5" lengthAdjust="spacingAndGlyphs">1.17210</text>
<text x="1558" y="477" textLength="32.5" lengthAdjust="spacingAndGlyphs">1.17145</text>
<text x="1558" y="511" textLength="32.5" lengthAdjust="spacingAndGlyphs">1.17080</text>
<text x="1558" y="545" textLength="32.5" lengthAdjust="spacingAndGlyphs">1.17015</text>

<text x="265" y="557.5" textLength="51" lengthAdjust="spacingAndGlyphs">30 Mar 2021</text>
<text x="329" y="557.5" textLength="54.5" lengthAdjust="spacingAndGlyphs">30 Mar 07:00</text>
<text x="393" y="557.5" textLength="54.5" lengthAdjust="spacingAndGlyphs">30 Mar 11:00</text>
<text x="457" y="557.5" textLength="54.5" lengthAdjust="spacingAndGlyphs">30 Mar 15:00</text>
<text x="521" y="557.5" textLength="54.5" lengthAdjust="spacingAndGlyphs">30 Mar 19:00</text>
<text x="585" y="557.5" textLength="54.5" lengthAdjust="spacingAndGlyphs">30 Mar 23:00</text>
<text x="649" y="557.5" textLength="54.5" lengthAdjust="spacingAndGlyphs">31 Mar 03:00</text>
<text x="713" y="557.5" textLength="54.5" lengthAdjust="spacingAndGlyphs">31 Mar 07:00</text>
<text x="777" y="557.5" textLength="54.5" lengthAdjust="spacingAndGlyphs">31 Mar 11:00</text>
<text x="841" y="557.5" textLength="54.5" lengthAdjust="spacingAndGlyphs">31 Mar 15:00</text>
<text x="905" y="557.5" textLength="54.5" lengthAdjust="spacingAndGlyphs">31 Mar 19:00</text>
<text x="969" y="557.5" textLength="54.5" lengthAdjust="spacingAndGlyphs">31 Mar 23:00</text>
<text x="1033" y="557.5" textLength="48.5" lengthAdjust="spacingAndGlyphs">1 Apr 03:00</text>
<text x="1097" y="557.5" textLength="48.5" lengthAdjust="spacingAndGlyphs">1 Apr 07:00</text>
<text x="1161" y="557.5" textLength="48.5" lengthAdjust="spacingAndGlyphs">1 Apr 11:00</text>
<text x="1225" y="557.5" textLength="48.5" lengthAdjust="spacingAndGlyphs">1 Apr 15:00</text>
<text x="1289" y="557.5" textLength="48.5" lengthAdjust="spacingAndGlyphs">1 Apr 19:00</text>
<text x="1353" y="557.5" textLength="48.5" lengthAdjust="spacingAndGlyphs">1 Apr 23:00</text>
<text x="1417" y="557.5" textLength="48.5" lengthAdjust="spacingAndGlyphs">2 Apr 03:00</text>
<text x="1481" y="557.5" textLength="48.5" lengthAdjust="spacingAndGlyphs">2 Apr 07:00</text>
</g>

<!-- price tags -->
<rect x="1554" y="127.5" width="41" height="11" fill="#ff00ff"/>
<text x="1558" y="137" font-size="11" fill="#4a0a5a" textLength="33" lengthAdjust="spacingAndGlyphs">1.17799</text>
<rect x="1554" y="140.5" width="41" height="11" fill="#fff"/>
<text x="1558" y="150" font-size="11" fill="#000" textLength="33" lengthAdjust="spacingAndGlyphs">1.17774</text>
</svg>
</body></html>
